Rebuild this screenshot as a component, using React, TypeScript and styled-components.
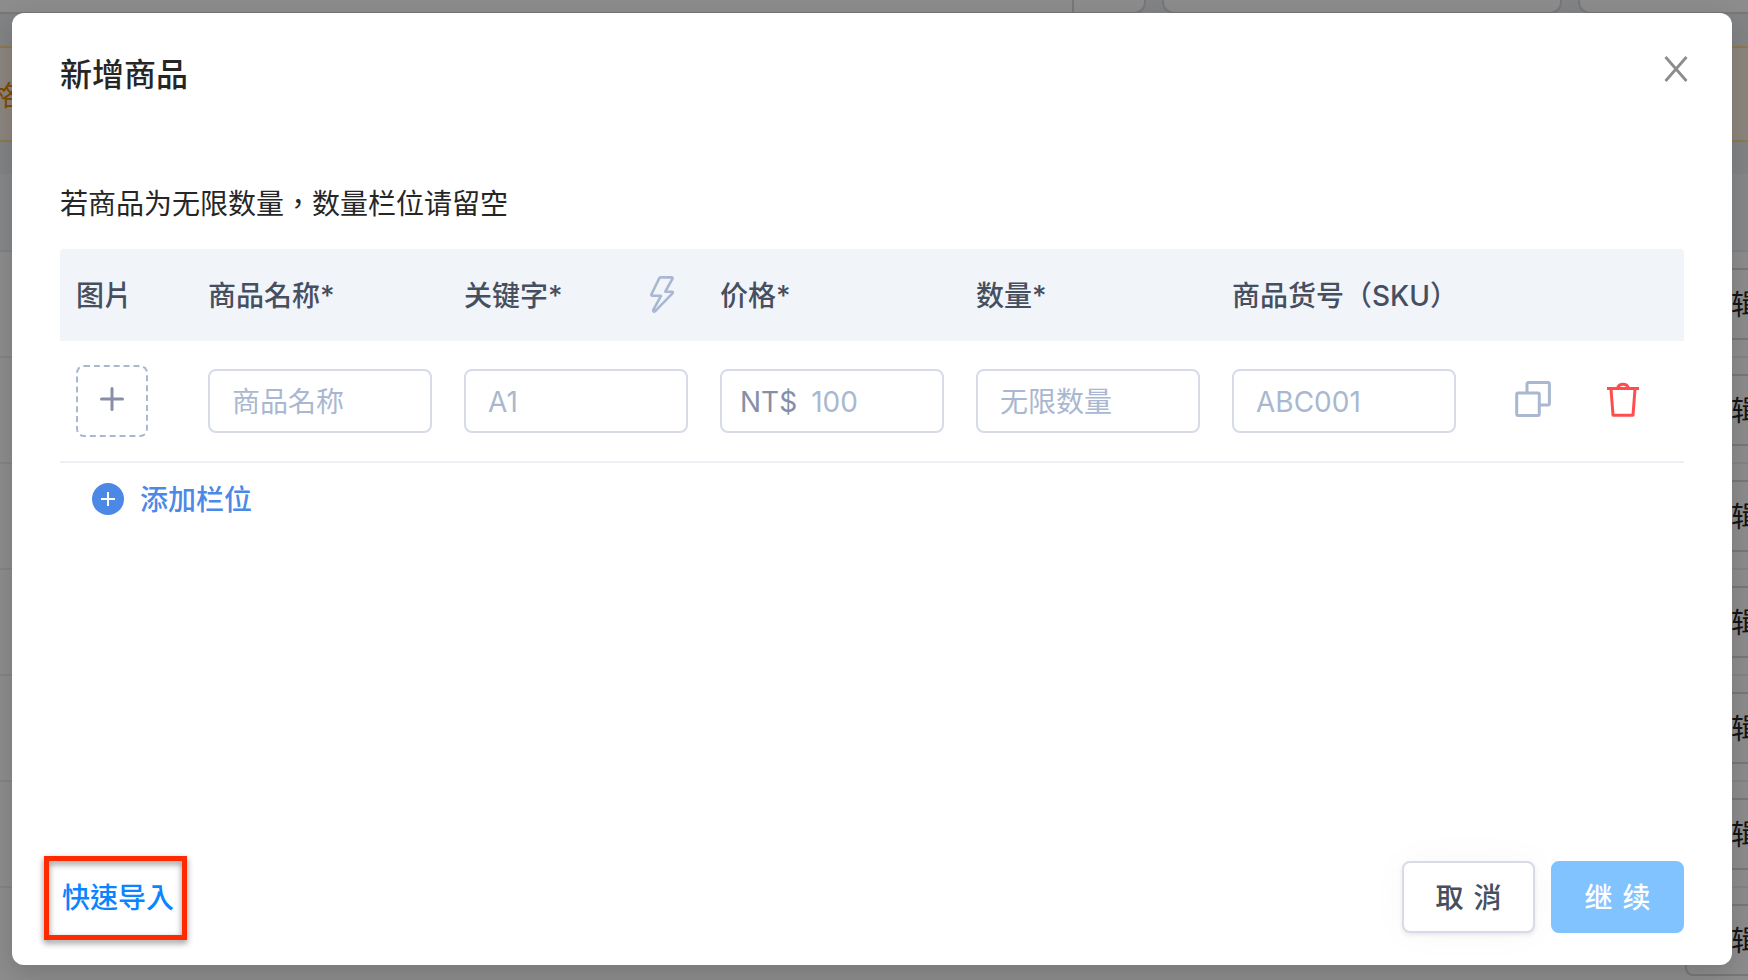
import React from "react";
import styled, { createGlobalStyle, css } from "styled-components";

const GlobalStyle = createGlobalStyle`
  *, *::before, *::after { box-sizing: border-box; }
  html, body, #root { height: 100%; }
  body {
    margin: 0;
    overflow: hidden;
    background: #ffffff;
    color: #262626;
    font-family: Inter, "Noto Sans CJK TC", "Noto Sans CJK SC", sans-serif;
    font-size: 28px;
    line-height: 40px;
  }
  button, input { font: inherit; }
`;

const Screen = styled.div`
  position: relative;
  height: 100vh;
  overflow: hidden;
`;

/* ---------- page behind the dialog ---------- */

const Page = styled.div`
  height: 100%;
  display: flex;
  flex-direction: column;
  background: #eceff3;
`;

const FilterBar = styled.div`
  display: flex;
  flex: none;
  height: 14px;
  gap: 16px;
`;

const FilterBox = styled.div<{ $width?: number; $edge?: "left" | "right" }>`
  flex: ${(p) => (p.$width ? `0 0 ${p.$width}px` : "1")};
  display: flex;
  justify-content: flex-end;
  background: #ffffff;
  border: 2px solid #d9d9d9;
  border-top: 0;
  border-radius: 0 0 12px 12px;
  ${(p) => p.$edge === "left" && css`border-left: 0; border-bottom-left-radius: 0;`}
  ${(p) => p.$edge === "right" && css`border-right: 0; border-bottom-right-radius: 0;`}
`;

const FilterAddon = styled.div`
  width: 72px;
  border-left: 2px solid #d9d9d9;
`;

const Notice = styled.div`
  flex: none;
  height: 96px;
  margin: 32px 0;
  padding: 28px 0;
  background: #fff3e6;
  border: solid #ffdf8a;
  border-width: 2px 0;
  color: #e68a00;
`;

const NoticeText = styled.p`
  margin: 0 0 0 -8px;
`;

const ListHead = styled.div`
  flex: none;
  height: 78px;
  border-bottom: 2px solid #ebedf2;
  background: #f3f6fa;
`;

const ListRow = styled.div`
  flex: none;
  display: flex;
  justify-content: flex-end;
  height: 106px;
  padding: 16px 0;
  background: #ffffff;
  border-bottom: 2px solid #edeef6;
`;

const EditButton = styled.button`
  width: 63px;
  padding: 2px 0 0 44px;
  overflow: hidden;
  white-space: nowrap;
  color: #262626;
  background: #ffffff;
  border: 2px solid #d9d9d9;
  border-right: 0;
  border-radius: 8px 0 0 8px;
`;

/* ---------- dialog ---------- */

const Overlay = styled.div`
  position: absolute;
  inset: 0;
  display: flex;
  padding: 13px 16px 15px 12px;
  background: rgba(0, 0, 0, 0.45);
`;

const Dialog = styled.section`
  flex: 1;
  display: flex;
  flex-direction: column;
  padding: 38px 48px 32px;
  background: #ffffff;
  border-radius: 12px;
  box-shadow: 0 8px 24px rgba(0, 0, 0, 0.15);
`;

const DialogHeader = styled.header`
  display: flex;
  justify-content: space-between;
  align-items: center;
`;

const Title = styled.h1`
  margin: 0;
  font-size: 32px;
  line-height: 48px;
  font-weight: 500;
`;

const IconButton = styled.button<{ $size: number }>`
  display: flex;
  align-items: center;
  justify-content: center;
  flex: none;
  width: ${(p) => p.$size}px;
  height: ${(p) => p.$size}px;
  padding: 0;
  border: 0;
  background: none;
  cursor: pointer;
`;

const CloseButton = styled(IconButton)`
  margin: 0 -8px 12px 0;
`;

const Hint = styled.p`
  margin: 85px 0 25px;
`;

const Table = styled.table`
  width: 100%;
  table-layout: fixed;
  border-collapse: separate;
  border-spacing: 0;
`;

const HeadCell = styled.th<{ $width?: number }>`
  ${(p) => p.$width && `width: ${p.$width}px;`}
  height: 92px;
  padding: 2px 16px 0;
  text-align: left;
  font-weight: 500;
  color: #464f60;
  background: #f1f4f9;
  white-space: nowrap;

  &:first-child { border-top-left-radius: 4px; }
  &:last-child { border-top-right-radius: 4px; }
`;

const HeadContent = styled.div`
  display: flex;
  align-items: flex-start;
  justify-content: space-between;
  padding-right: 8px;
`;

const Cell = styled.td`
  height: 122px;
  padding: 0 16px;
  border-bottom: 2px solid #edf1f6;
`;

const Field = styled.label`
  display: flex;
  align-items: center;
  height: 64px;
  padding: 2px 16px 0 22px;
  border: 2px solid #d7dae7;
  border-radius: 8px;
  background: #ffffff;
`;

const PriceField = styled(Field)`
  padding-left: 18px;
  gap: 14px;
`;

const Prefix = styled.span`
  color: #868fa7;
`;

const TextInput = styled.input`
  flex: 1;
  min-width: 0;
  width: 100%;
  padding: 0;
  border: 0;
  outline: 0;
  background: none;
  color: #464f60;

  &::placeholder { color: #a9b8d0; opacity: 1; }
`;

const UploadButton = styled.button`
  display: flex;
  align-items: center;
  justify-content: center;
  width: 72px;
  height: 72px;
  padding: 0 0 4px;
  background: #ffffff;
  border: 2px dashed #a9b8d0;
  border-radius: 8px;
`;

const RowActions = styled.div`
  display: flex;
  justify-content: center;
  gap: 54px;
  padding-bottom: 4px;
`;

const AddRowButton = styled.button`
  display: flex;
  align-items: center;
  align-self: flex-start;
  gap: 16px;
  margin: 15px 0 0 32px;
  padding: 0;
  border: 0;
  background: none;
  font-weight: 500;
  color: #4c88e6;
  cursor: pointer;
`;

const AddRowLabel = styled.span`
  padding-top: 2px;
`;

const Footer = styled.footer`
  display: flex;
  gap: 16px;
  margin-top: auto;
`;

const ImportArea = styled.div`
  position: relative;
  margin-right: auto;
`;

const Highlight = styled.div`
  position: absolute;
  inset: -5px -11px -7px -16px;
  border: 5px solid #ff2a00;
  filter: drop-shadow(0 3px 3px rgba(0, 0, 0, 0.45));
  pointer-events: none;
`;

const Button = styled.button<{ $kind: "link" | "default" | "primary" }>`
  display: flex;
  align-items: center;
  justify-content: center;
  gap: 10px;
  height: 72px;
  padding: 2px 0 0;
  border: 2px solid transparent;
  border-radius: 8px;
  background: none;
  font-weight: 500;
  ${(p) => p.$kind === "link" && css`color: #0a84ff;`}
  ${(p) => p.$kind !== "link" && css`width: 133px;`}
  ${(p) =>
    p.$kind === "default" &&
    css`
      color: #464f60;
      background: #ffffff;
      border-color: #d7dae7;
      box-shadow: 0 2px 4px rgba(70, 79, 96, 0.12), 0 0 40px rgba(0, 0, 0, 0.03);
    `}
  ${(p) =>
    p.$kind === "primary" &&
    css`
      color: #ffffff;
      background: #80c3ff;
      border-color: #80c3ff;
    `}
`;

const CloseIcon = () => (
  <svg width="24" height="26" viewBox="0 0 24 26" fill="none" stroke="#8c8c8c" strokeWidth="2.8" aria-hidden>
    <path d="M1.5 1L22.5 25M22.5 1L1.5 25" />
  </svg>
);

const BoltIcon = () => (
  <svg width="24" height="37" viewBox="0 0 24 37" fill="none" stroke="#a9b8d0" strokeWidth="2.6" strokeLinejoin="round" aria-hidden>
    <path d="M10.6 1.4H21.4Q23.2 1.4 22.3 3L15.3 15.7H21.8Q23.6 15.8 22.2 17.6L5.2 35.2Q3.2 36.4 3.2 34.2L11 19.8H2.6Q.9 19.6 1.6 18L9.2 2.4Q9.7 1.4 10.6 1.4Z" />
  </svg>
);

const PlusIcon = () => (
  <svg width="24" height="24" viewBox="0 0 24 24" stroke="#868fa7" strokeWidth="3" strokeLinecap="round" aria-hidden>
    <path d="M1.5 12H22.5M12 1.5V22.5" />
  </svg>
);

const AddIcon = () => (
  <svg width="32" height="32" viewBox="0 0 32 32" aria-hidden>
    <circle cx="16" cy="16" r="16" fill="#4c88e6" />
    <path d="M9 16H23M16 9V23" stroke="#fff" strokeWidth="2" />
  </svg>
);

const CopyIcon = () => (
  <svg width="36" height="36" viewBox="0 0 36 36" fill="none" stroke="#a9b8d0" strokeWidth="3" aria-hidden>
    <rect x="1.7" y="11.9" width="22.6" height="22.6" rx="1.4" />
    <path d="M12 12V3Q12 1.6 13.4 1.6H33Q34.4 1.6 34.4 3V22.6Q34.4 24 33 24H24.4" />
  </svg>
);

const TrashIcon = () => (
  <svg width="32" height="36" viewBox="0 0 32 36" fill="none" stroke="#ff4d4f" strokeWidth="3" aria-hidden>
    <path d="M0 7.6H32M4 8L6 34.2H26L28 8" strokeLinejoin="round" />
    <path d="M10.4 7.6A5.8 5.8 0 0 1 21.6 7.6" />
  </svg>
);

const rows = [0, 1, 2, 3, 4, 5, 6];

export default function App() {
  return (
    <>
      <GlobalStyle />
      <Screen>
        <Page aria-hidden>
          <FilterBar>
            <FilterBox $edge="left">
              <FilterAddon />
            </FilterBox>
            <FilterBox $width={400} />
            <FilterBox $width={170} $edge="right" />
          </FilterBar>
          <Notice>
            <NoticeText>格</NoticeText>
          </Notice>
          <ListHead />
          {rows.map((row) => (
            <ListRow key={row}>
              <EditButton tabIndex={-1}>辑</EditButton>
            </ListRow>
          ))}
        </Page>
        <Overlay>
          <Dialog role="dialog" aria-labelledby="dialog-title">
            <DialogHeader>
              <Title id="dialog-title">新增商品</Title>
              <CloseButton $size={32} aria-label="关闭">
                <CloseIcon />
              </CloseButton>
            </DialogHeader>
            <Hint>若商品为无限数量，数量栏位请留空</Hint>
            <Table>
              <thead>
                <tr>
                  <HeadCell $width={132}>图片</HeadCell>
                  <HeadCell>商品名称*</HeadCell>
                  <HeadCell>
                    <HeadContent>
                      关键字*
                      <IconButton $size={36} aria-label="自动生成">
                        <BoltIcon />
                      </IconButton>
                    </HeadContent>
                  </HeadCell>
                  <HeadCell>价格*</HeadCell>
                  <HeadCell>数量*</HeadCell>
                  <HeadCell>商品货号（SKU）</HeadCell>
                  <HeadCell $width={212} aria-label="操作" />
                </tr>
              </thead>
              <tbody>
                <tr>
                  <Cell>
                    <UploadButton aria-label="上传图片">
                      <PlusIcon />
                    </UploadButton>
                  </Cell>
                  <Cell>
                    <Field>
                      <TextInput aria-label="商品名称" placeholder="商品名称" />
                    </Field>
                  </Cell>
                  <Cell>
                    <Field>
                      <TextInput aria-label="关键字" placeholder="A1" />
                    </Field>
                  </Cell>
                  <Cell>
                    <PriceField>
                      <Prefix>NT$</Prefix>
                      <TextInput aria-label="价格" placeholder="100" />
                    </PriceField>
                  </Cell>
                  <Cell>
                    <Field>
                      <TextInput aria-label="数量" placeholder="无限数量" />
                    </Field>
                  </Cell>
                  <Cell>
                    <Field>
                      <TextInput aria-label="商品货号" placeholder="ABC001" />
                    </Field>
                  </Cell>
                  <Cell>
                    <RowActions>
                      <IconButton $size={36} aria-label="复制">
                        <CopyIcon />
                      </IconButton>
                      <IconButton $size={36} aria-label="删除">
                        <TrashIcon />
                      </IconButton>
                    </RowActions>
                  </Cell>
                </tr>
              </tbody>
            </Table>
            <AddRowButton>
              <AddIcon />
              <AddRowLabel>添加栏位</AddRowLabel>
            </AddRowButton>
            <Footer>
              <ImportArea>
                <Button $kind="link">快速导入</Button>
                <Highlight />
              </ImportArea>
              <Button $kind="default">
                <span>取</span> <span>消</span>
              </Button>
              <Button $kind="primary">
                <span>继</span> <span>续</span>
              </Button>
            </Footer>
          </Dialog>
        </Overlay>
      </Screen>
    </>
  );
}
